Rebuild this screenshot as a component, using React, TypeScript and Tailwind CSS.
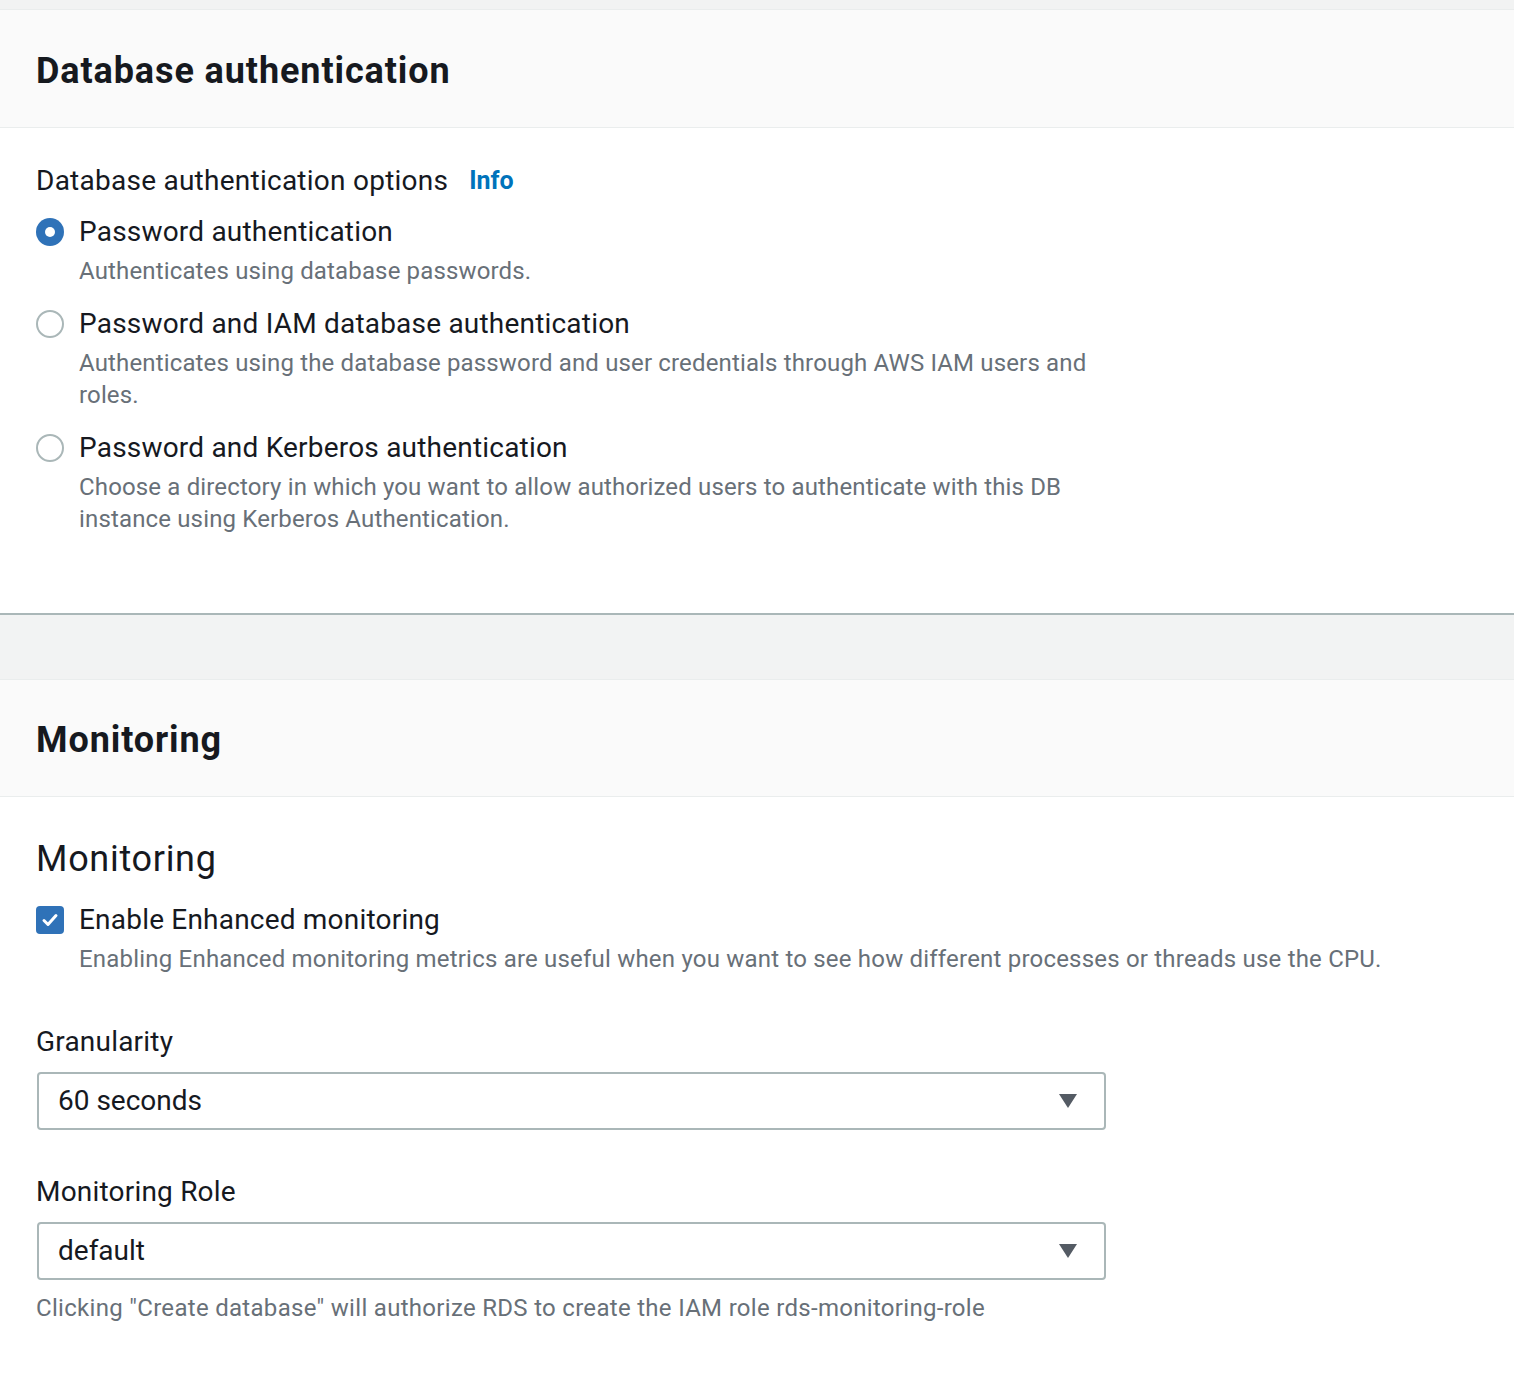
import { useState } from 'react';

const options = [
  {
    id: 'password',
    label: 'Password authentication',
    description: 'Authenticates using database passwords.',
  },
  {
    id: 'iam',
    label: 'Password and IAM database authentication',
    description:
      'Authenticates using the database password and user credentials through AWS IAM users and roles.',
  },
  {
    id: 'kerberos',
    label: 'Password and Kerberos authentication',
    description:
      'Choose a directory in which you want to allow authorized users to authenticate with this DB instance using Kerberos Authentication.',
  },
];

const Radio = ({ checked }: { checked: boolean }) =>
  checked ? (
    <span className="mt-[6px] flex h-[28px] w-[28px] shrink-0 items-center justify-center rounded-full bg-[#2f72b8]">
      <span className="h-[10px] w-[10px] rounded-full bg-white" />
    </span>
  ) : (
    <span className="mt-[6px] h-[28px] w-[28px] shrink-0 rounded-full border-2 border-[#aab7b8] bg-white" />
  );

const Checkbox = () => (
  <span className="mt-[6px] flex h-[28px] w-[28px] shrink-0 items-center justify-center rounded-[4px] bg-[#2f72b8]">
    <svg width="20" height="20" viewBox="0 0 20 20" fill="none">
      <path d="M4 10.5l4 4 8-9" stroke="white" strokeWidth="3" strokeLinecap="round" strokeLinejoin="round" />
    </svg>
  </span>
);

const Select = ({ value }: { value: string }) => (
  <div className="ml-px flex h-[58px] w-[1069px] items-center justify-between rounded-[4px] border-2 border-[#aab7b8] bg-white pl-[19px] pr-[26px] text-[28px] text-[#16191f]">
    <span>{value}</span>
    <svg width="20" height="16" viewBox="0 0 20 16">
      <path d="M1 1h18l-9 14z" fill="#545b64" />
    </svg>
  </div>
);

const SectionHeader = ({ title, tall }: { title: string; tall?: boolean }) => (
  <div
    className={
      tall
        ? 'flex h-[118px] items-center border-b border-[#eaeded] bg-[#fafafa] px-[36px] pt-[5px]'
        : 'flex h-[117px] items-center border-b border-[#eaeded] bg-[#fafafa] px-[36px] pt-[3px]'
    }
  >
    <h2 className="text-[36px] font-bold tracking-[0.9px] text-[#16191f]">{title}</h2>
  </div>
);

export default function App() {
  const [selected, setSelected] = useState('password');

  return (
    <div className="min-h-screen bg-white font-[Roboto] text-[#16191f]">
      <div className="h-[10px] border-b border-[#eaeded] bg-[#f2f3f3]" />

      <section className="border-b-2 border-[#aab7b8]">
        <SectionHeader title="Database authentication" tall />
        <div className="px-[36px] pt-[33px] pb-[78px]">
          <div className="flex h-[40px] items-center text-[28px] leading-[40px] tracking-[0.25px]">
            <span>Database authentication options</span>
            <a href="#" className="ml-[21px] text-[25px] font-bold tracking-normal text-[#0073bb]">
              Info
            </a>
          </div>
          <div className="mt-[11px] flex flex-col gap-[17px]">
            {options.map((o) => (
              <label key={o.id} className="flex cursor-pointer gap-[15px]" onClick={() => setSelected(o.id)}>
                <Radio checked={selected === o.id} />
                <div className="max-w-[1025px]">
                  <div className="text-[28px] leading-[40px] tracking-[0.2px]">{o.label}</div>
                  <div className="mt-[3px] text-[24px] leading-[32px] tracking-[0.15px] text-[#687078]">
                    {o.description}
                  </div>
                </div>
              </label>
            ))}
          </div>
        </div>
      </section>

      <div className="h-[64px] bg-[#f2f3f3]" />

      <section className="border-t border-[#eaeded]">
        <SectionHeader title="Monitoring" />
        <div className="px-[36px] pt-[40px] pb-[60px]">
          <h3 className="text-[36px] leading-[44px] tracking-[0.7px]">Monitoring</h3>
          <div className="mt-[19px] flex gap-[15px]">
            <Checkbox />
            <div>
              <div className="text-[28px] leading-[40px] tracking-[0.2px]">Enable Enhanced monitoring</div>
              <div className="mt-[3px] text-[24px] leading-[32px] tracking-[0.2px] text-[#687078]">
                Enabling Enhanced monitoring metrics are useful when you want to see how different processes or threads use the CPU.
              </div>
            </div>
          </div>

          <div className="mt-[47px] text-[28px] leading-[40px] tracking-[0.2px]">Granularity</div>
          <div className="mt-[10px]">
            <Select value="60 seconds" />
          </div>

          <div className="mt-[42px] text-[28px] leading-[40px] tracking-[0.2px]">Monitoring Role</div>
          <div className="mt-[10px]">
            <Select value="default" />
          </div>
          <div className="mt-[12px] text-[24px] leading-[32px] tracking-[0.3px] text-[#687078]">
            Clicking "Create database" will authorize RDS to create the IAM role rds-monitoring-role
          </div>
        </div>
      </section>
    </div>
  );
}
